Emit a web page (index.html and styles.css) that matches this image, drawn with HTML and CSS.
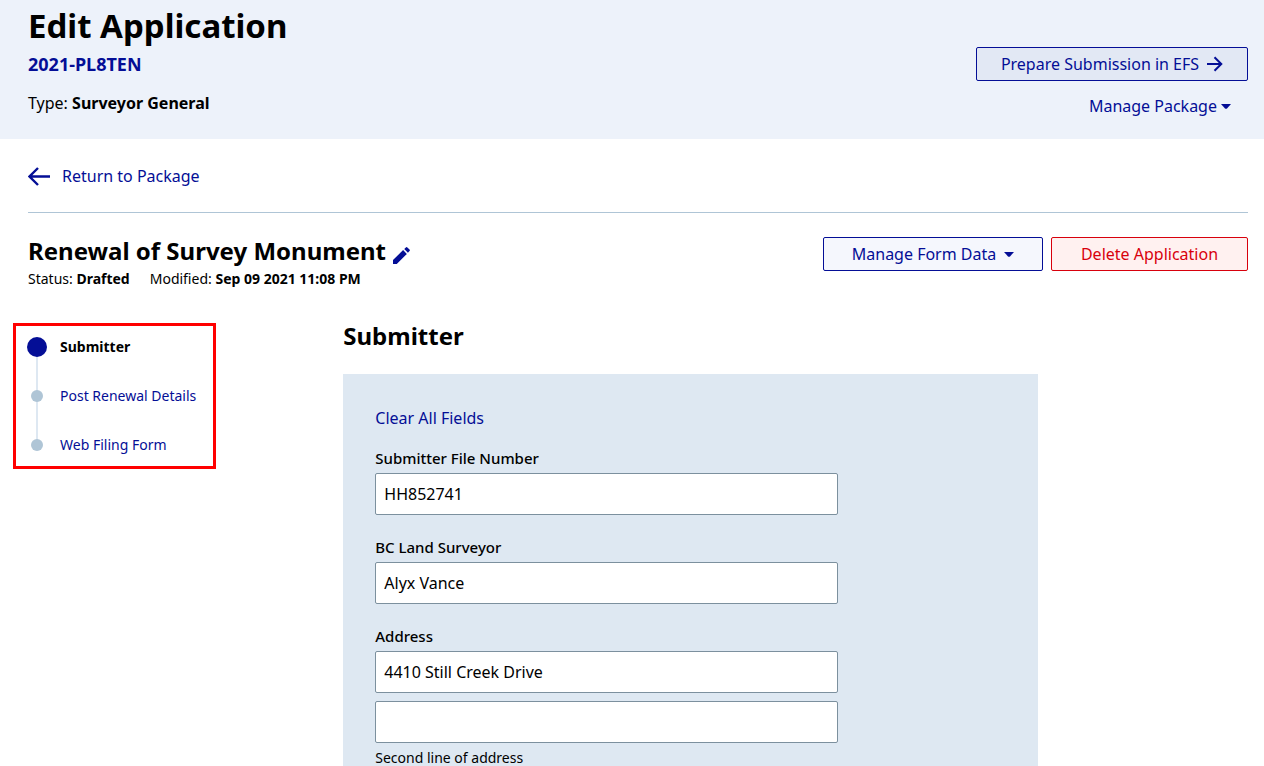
FILE: index.html
```html
<!DOCTYPE html>
<html lang="en">
<head>
<meta charset="utf-8">
<meta name="viewport" content="width=device-width, initial-scale=1">
<title>Edit Application</title>
<link rel="stylesheet" href="styles.css">
</head>
<body>
<header class="page-header">
  <div>
    <h1 class="page-title">Edit Application</h1>
    <p class="package-id">2021-PL8TEN</p>
    <p class="package-type">Type: <strong>Surveyor General</strong></p>
  </div>
  <div class="header-actions">
    <button type="button" class="btn btn-prepare">Prepare Submission in EFS
      <svg class="icon-next" width="16" height="16" viewBox="0 0 16 16" aria-hidden="true"><path d="M0 8h14M7.500 1.200 14.300 8l-6.800 6.800" fill="none" stroke="currentColor" stroke-width="2"/></svg>
    </button>
    <button type="button" class="btn btn-plain">Manage Package
      <svg width="10" height="5" viewBox="0 0 10 5" aria-hidden="true"><path d="M0 0h10L6 4.400q-1 .8-2 0z" fill="currentColor"/></svg>
    </button>
  </div>
</header>
<main class="page-body">
  <a class="return-link" href="#">
    <svg width="22" height="20" viewBox="0 0 22 20" aria-hidden="true"><path d="M22 10.500H1.500M10 2 1.500 10.500l8.500 8.500" fill="none" stroke="currentColor" stroke-width="2.400"/></svg>
    Return to Package
  </a>
  <div class="application-bar">
    <div>
      <div class="application-heading">
        <h2 class="application-title">Renewal of Survey Monument</h2>
        <button type="button" class="edit-button" aria-label="Rename application">
          <svg width="17" height="17" viewBox="0 0 18 18" aria-hidden="true"><path d="M0 13.800 10.700 3.300l4 4L4 18H0zM11.900 2.200 13.600.5q.8-.8 1.600 0l2.300 2.200q.8.8 0 1.600L15.800 6z" fill="currentColor"/></svg>
        </button>
      </div>
      <p class="application-meta"><span>Status: <strong>Drafted</strong></span><span>Modified: <strong>Sep 09 2021 11:08 PM</strong></span></p>
    </div>
    <div class="application-actions">
      <button type="button" class="btn btn-manage">Manage Form Data
        <svg width="10" height="5" viewBox="0 0 10 5" aria-hidden="true"><path d="M0 0h10L6 4.400q-1 .8-2 0z" fill="currentColor"/></svg>
      </button>
      <button type="button" class="btn btn-delete">Delete Application</button>
    </div>
  </div>
  <div class="columns">
    <nav class="steps" aria-label="Form sections">
      <ol class="step-list">
        <li class="step step-current"><span class="dot"></span><a href="#" aria-current="step">Submitter</a></li>
        <li class="step"><span class="dot"></span><a href="#">Post Renewal Details</a></li>
        <li class="step"><span class="dot"></span><a href="#">Web Filing Form</a></li>
      </ol>
    </nav>
    <section class="content">
      <h2 class="section-title">Submitter</h2>
      <form class="panel">
        <a class="clear-link" href="#">Clear All Fields</a>
        <div class="field">
          <label for="file-number">Submitter File Number</label>
          <input id="file-number" type="text" value="HH852741">
        </div>
        <div class="field">
          <label for="surveyor">BC Land Surveyor</label>
          <input id="surveyor" type="text" value="Alyx Vance">
        </div>
        <div class="field">
          <label for="address-1">Address</label>
          <input id="address-1" type="text" value="4410 Still Creek Drive">
          <input id="address-2" class="second-line" type="text">
          <label class="hint" for="address-2">Second line of address</label>
        </div>
      </form>
    </section>
  </div>
</main>
</body>
</html>
```
FILE: styles.css
```css
* { box-sizing: border-box; }

body {
  margin: 0;
  font: 16px/24px "Noto Sans", sans-serif;
  color: #000;
  background: #fff;
}

h1, h2, p, ol { margin: 0; padding: 0; }
a { color: #040e96; text-decoration: none; }
button, input { font: inherit; }
button { cursor: pointer; }
svg { flex: none; }
strong { font-weight: 700; }

.page-header {
  display: flex;
  justify-content: space-between;
  padding: 4px 16px 16px 28px;
  background: #edf2fa;
}

.page-title { font-size: 33px; line-height: 44px; }

.package-id {
  margin-top: 4px;
  font-size: 18px;
  font-weight: 700;
  color: #040e96;
}

.package-type { margin-top: 15px; }

.header-actions {
  display: flex;
  flex-direction: column;
  align-items: flex-end;
  gap: 8px;
  padding-top: 43px;
}

.btn {
  display: flex;
  align-items: center;
  justify-content: center;
  height: 34px;
  padding: 0 16px;
  gap: 8px;
  border: 1px solid #040e96;
  border-radius: 2px;
  color: #040e96;
  white-space: nowrap;
}

.btn-prepare { min-width: 272px; background: #e2e8f4; }
.btn-plain { gap: 4px; border-color: transparent; background: transparent; }
.btn-manage { min-width: 220px; background: #f5f7fd; }
.btn-delete { min-width: 197px; border-color: #d8000c; color: #d8000c; background: #fff1f0; }

.page-body { padding: 25px 16px 0 28px; }

.return-link {
  display: flex;
  align-items: center;
  gap: 12px;
  padding-bottom: 24px;
  border-bottom: 1px solid #afc5d6;
}

.application-bar {
  display: flex;
  justify-content: space-between;
  align-items: flex-start;
  padding-top: 22px;
}

.application-heading { display: flex; align-items: center; gap: 7px; }
.application-title { font-size: 24px; line-height: 32px; }

.edit-button {
  display: flex;
  padding: 8px 0 0;
  border: 0;
  background: none;
  color: #040e96;
}

.application-meta {
  display: flex;
  gap: 20px;
  font-size: 14px;
}

.application-actions { display: flex; gap: 8px; padding-top: 2px; }

.columns {
  display: flex;
  align-items: flex-start;
  gap: 127px;
  padding-top: 29px;
}

.steps {
  flex: none;
  margin: 3px 0 0 -15px;
  padding: 11px 17px 11px 11px;
  border: 3px solid #f00;
}

.step-list {
  display: flex;
  flex-direction: column;
  gap: 29px;
  list-style: none;
  font-size: 14px;
  line-height: 20px;
}

.step {
  display: grid;
  grid-template-columns: 20px auto;
  align-items: center;
  gap: 13px;
  position: relative;
}

.step:not(:last-child)::before {
  content: "";
  position: absolute;
  top: 10px;
  left: 9px;
  width: 2px;
  height: 49px;
  background: #dee8f2;
}

.dot {
  position: relative;
  width: 12px;
  height: 12px;
  border-radius: 50%;
  justify-self: center;
  background: #afc5d6;
}

.step-current .dot { width: 20px; height: 20px; background: #040e96; }
.step-current a { font-weight: 700; color: #000; }

.content { flex: 1; max-width: 695px; }
.section-title { font-size: 24px; line-height: 32px; }

.panel {
  margin-top: 22px;
  padding: 32px 32px 40px;
  background: #dee8f2;
}

.clear-link { display: block; }

.field {
  display: flex;
  flex-direction: column;
  max-width: 463px;
  padding-top: 16px;
}

.field + .field { padding-top: 20px; }

.field label {
  padding-bottom: 3px;
  font-size: 15px;
  font-weight: 500;
}

.field input {
  width: 100%;
  height: 42px;
  padding: 0 8px;
  border: 1px solid #7c909e;
  border-radius: 2px;
  color: #000;
  background: #fff;
}

.field .second-line { margin-top: 8px; }
.field .hint { padding-top: 3px; font-size: 14px; font-weight: 400; }
```
